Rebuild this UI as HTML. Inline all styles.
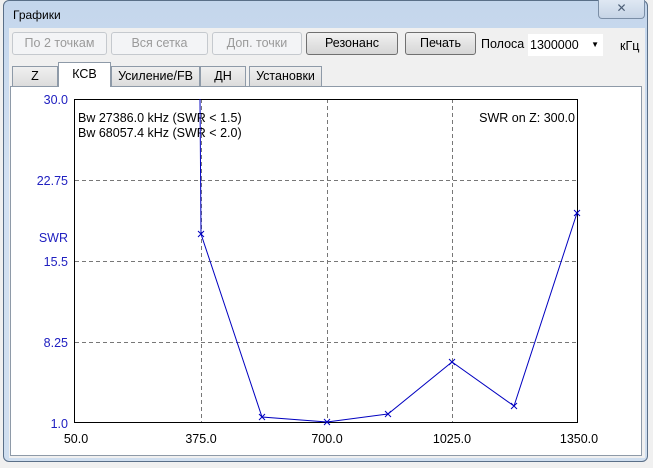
<!DOCTYPE html><html><head><meta charset="utf-8"><style>
body{margin:0;width:653px;height:468px;overflow:hidden;background:#f0f0f0;font-family:"Liberation Sans",sans-serif;font-size:12px;position:relative}
.win{position:absolute;left:3px;top:0;width:645px;height:462px;background:linear-gradient(#c4d6ec,#d3e1f2 40%,#cfdeef);border:1px solid #5a6f88;border-radius:6px;box-sizing:border-box}
.a{position:absolute}
.btn{position:absolute;top:32px;height:23px;box-sizing:border-box;border:1px solid #adb2b8;border-radius:3px;background:linear-gradient(#f2f2f2,#e3e3e3 50%,#d6d6d6);text-align:center;line-height:21px;font-size:12.5px;color:#000}
.dis{color:#9a9a9a;background:#f3f4f6;border-color:#c5c9ce}
.tab{position:absolute;top:66px;height:21px;box-sizing:border-box;border:1px solid #8e9aa8;background:linear-gradient(#f0f0f0,#dcdcdc);text-align:center;line-height:19px;font-size:12.5px}
</style></head><body>
<div class="win"></div>
<div class="a" style="left:13px;top:8px;font-size:12px">Графики</div>
<div class="a" style="left:598px;top:0;width:45px;height:18px;border:1px solid #7b8ea6;border-top:none;border-radius:0 0 4px 4px;background:linear-gradient(#dfe8f3,#c6d4e6);text-align:center;color:#4b5d75;font-size:12px;line-height:17px">✕</div>
<div class="a" style="left:9px;top:28px;width:636px;height:430px;background:#f0f0f0"></div>
<div class="btn dis" style="left:12px;width:95px">По 2 точкам</div>
<div class="btn dis" style="left:111px;width:97px">Вся сетка</div>
<div class="btn dis" style="left:212px;width:90px">Доп. точки</div>
<div class="btn" style="left:306px;width:92px;border-color:#707070">Резонанс</div>
<div class="btn" style="left:405px;width:71px;border-color:#707070">Печать</div>
<div class="a" style="left:481px;top:37px;font-size:12.5px">Полоса</div>
<div class="a" style="left:528px;top:34px;width:75px;height:22px;background:#fff;font-size:12.5px;line-height:22px;padding-left:2px;box-sizing:border-box">1300000 <span style="position:absolute;right:4px;font-size:8px">▼</span></div>
<div class="a" style="left:620px;top:39px;font-size:12.5px">кГц</div>
<div class="a" style="left:10px;top:86px;width:632px;height:370px;background:#fff;border:1px solid #8e9aa8;box-sizing:border-box"></div>
<div class="tab" style="left:12px;width:46px">Z</div>
<div class="tab" style="left:58px;width:53px;top:62px;height:25px;background:#fff;border-bottom:none;line-height:22px">КСВ</div>
<div class="tab" style="left:111px;width:89px">Усиление/FB</div>
<div class="tab" style="left:200px;width:46px">ДН</div>
<div class="tab" style="left:249px;width:73px">Установки</div>
<svg class="a" style="left:0;top:0" width="653" height="468" font-family="Liberation Sans" font-size="12.5">
<g stroke="#777" stroke-dasharray="4,3" stroke-width="1">
<line x1="201.5" y1="99" x2="201.5" y2="423"/><line x1="327.5" y1="99" x2="327.5" y2="423"/><line x1="452.5" y1="99" x2="452.5" y2="423"/>
<line x1="75" y1="180.5" x2="578" y2="180.5"/><line x1="75" y1="261.5" x2="578" y2="261.5"/><line x1="75" y1="342.5" x2="578" y2="342.5"/>
</g>
<rect x="74.5" y="99.5" width="503" height="323" fill="none" stroke="#000"/>
<g fill="#2020c0" text-anchor="end"><text x="68" y="104">30.0</text><text x="68" y="185">22.75</text><text x="68" y="242">SWR</text><text x="68" y="266">15.5</text><text x="68" y="347">8.25</text><text x="68" y="428">1.0</text></g>
<g text-anchor="middle" fill="#000"><text x="76" y="443">50.0</text><text x="201" y="443">375.0</text><text x="327" y="443">700.0</text><text x="452" y="443">1025.0</text><text x="579" y="443">1350.0</text></g>
<text x="78" y="122">Bw 27386.0 kHz (SWR &lt; 1.5)</text>
<text x="78" y="137">Bw 68057.4 kHz (SWR &lt; 2.0)</text>
<text x="575" y="122" text-anchor="end">SWR on Z: 300.0</text>
<polyline fill="none" stroke="#0000c0" points="200,99 201,234 262,417 327,422 388,414 452,362 514,406 577,213"/>
<g stroke="#0000c0"><path d="M198 231l6 6M204 231l-6 6M259 414l6 6M265 414l-6 6M324 419l6 6M330 419l-6 6M385 411l6 6M391 411l-6 6M449 359l6 6M455 359l-6 6M511 403l6 6M517 403l-6 6M574 210l6 6M580 210l-6 6"/></g>
</svg>
</body></html>
